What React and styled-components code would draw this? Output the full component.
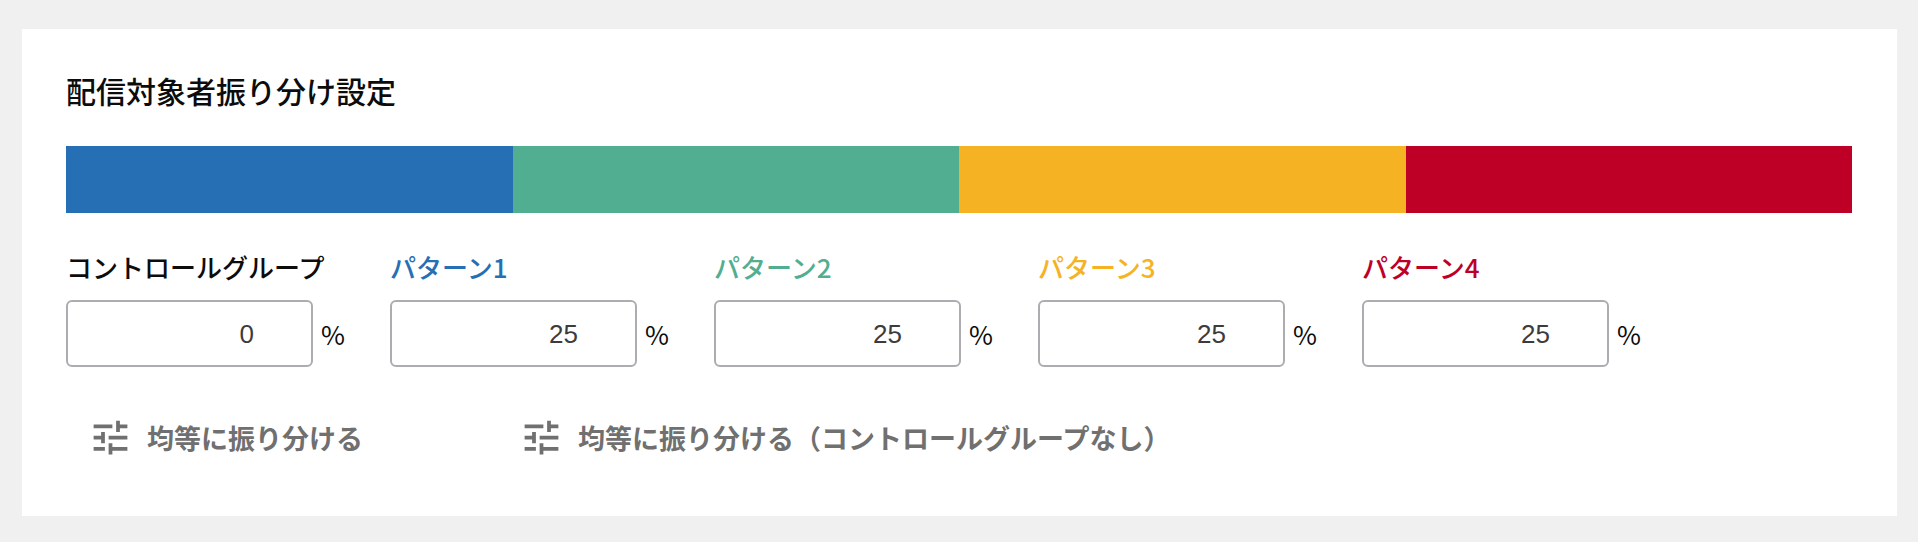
import { useState } from "react"
import styled, { createGlobalStyle } from "styled-components"
import { MdTune } from "react-icons/md"

const CONTROL = { id: "control", label: "コントロールグループ", color: "#0c0c0c" }

const PATTERNS = [
    { id: "pattern1", label: "パターン1", color: "#266fb4" },
    { id: "pattern2", label: "パターン2", color: "#51ae91" },
    { id: "pattern3", label: "パターン3", color: "#f5b324" },
    { id: "pattern4", label: "パターン4", color: "#be0026" },
]

const GROUPS = [CONTROL, ...PATTERNS]

const GlobalStyle = createGlobalStyle`
    * {
        box-sizing: border-box;
    }
    body {
        margin: 0;
        background-color: #f0f0f0;
        color: #0c0c0c;
        font-family: "Noto Sans CJK JP", sans-serif;
    }
`

const Card = styled.section`
    margin: 29px 21px 26px 22px;
    padding: 39px 45px 56px 44px;
    background-color: #ffffff;
`

const Title = styled.h1`
    margin: 0 0 34px;
    font-size: 30px;
    font-weight: 500;
    line-height: 44px;
`

const Bar = styled.div`
    display: flex;
    height: 67px;
`

const Segment = styled.div`
    background-color: ${(props) => props.$color};
`

const Fields = styled.div`
    display: flex;
    flex-wrap: wrap;
    margin-top: 34px;
`

const Field = styled.div`
    width: 324px;
`

const Label = styled.label`
    display: block;
    margin-bottom: 13px;
    color: ${(props) => props.$color};
    font-size: 26px;
    font-weight: 500;
    line-height: 40px;
`

const InputRow = styled.div`
    display: flex;
    align-items: center;
    gap: 8px;
    font-size: 26px;
`

const PercentInput = styled.input`
    width: 247px;
    height: 67px;
    padding: 2px 57px 0 16px;
    border: 2px solid #adadb1;
    border-radius: 6px;
    background-color: #ffffff;
    color: #3c3c3c;
    font-family: "Liberation Sans", sans-serif;
    font-size: 26px;
    text-align: right;
    appearance: textfield;

    &::-webkit-inner-spin-button {
        display: none;
    }
`

const Actions = styled.div`
    display: flex;
    flex-wrap: wrap;
    gap: 112px;
    margin-top: 48px;
`

const ActionButton = styled.button`
    display: flex;
    align-items: center;
    gap: 14px;
    padding: 0 22px;
    border: none;
    background: none;
    color: #707070;
    font-family: inherit;
    font-size: 27px;
    font-weight: 700;
    line-height: 45px;
    cursor: pointer;
`

export default function App() {
    const [rates, setRates] = useState({
        control: 0,
        pattern1: 25,
        pattern2: 25,
        pattern3: 25,
        pattern4: 25,
    })

    const distribute = (groups) => {
        const next = { control: 0 }
        groups.forEach((group) => {
            next[group.id] = 100 / groups.length
        })
        setRates(next)
    }

    return (
        <>
            <GlobalStyle />
            <Card>
                <Title>配信対象者振り分け設定</Title>
                <Bar>
                    {GROUPS.map((group) => (
                        <Segment
                            key={group.id}
                            $color={group.color}
                            style={{ width: `${rates[group.id]}%` }}
                        />
                    ))}
                </Bar>
                <Fields>
                    {GROUPS.map((group) => (
                        <Field key={group.id}>
                            <Label htmlFor={group.id} $color={group.color}>
                                {group.label}
                            </Label>
                            <InputRow>
                                <PercentInput
                                    id={group.id}
                                    type="number"
                                    min="0"
                                    max="100"
                                    value={rates[group.id]}
                                    onChange={(e) =>
                                        setRates({ ...rates, [group.id]: Number(e.target.value) })
                                    }
                                />
                                <span>%</span>
                            </InputRow>
                        </Field>
                    ))}
                </Fields>
                <Actions>
                    <ActionButton type="button" onClick={() => distribute(GROUPS)}>
                        <MdTune size={45} />
                        均等に振り分ける
                    </ActionButton>
                    <ActionButton type="button" onClick={() => distribute(PATTERNS)}>
                        <MdTune size={45} />
                        均等に振り分ける（コントロールグループなし）
                    </ActionButton>
                </Actions>
            </Card>
        </>
    )
}
